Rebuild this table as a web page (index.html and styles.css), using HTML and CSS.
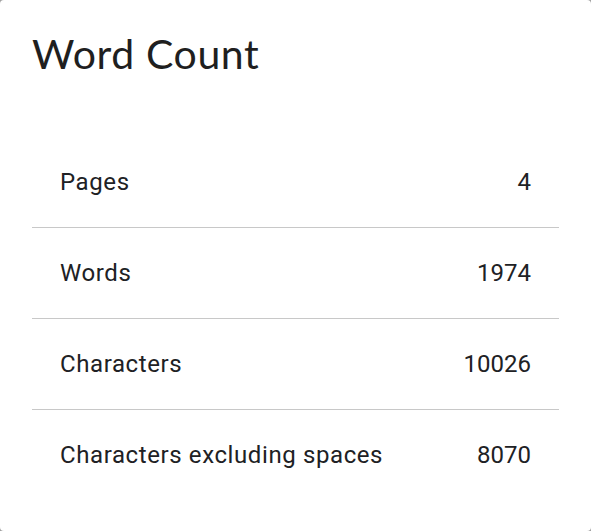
FILE: index.html
```html
<!DOCTYPE html>
<html>
<head>
<meta charset="utf-8">
<link rel="stylesheet" href="styles.css">
</head>
<body>
<div class="dialog">
  <h1 class="title">Word Count</h1>
  <div class="list">
    <div class="row"><span class="label">Pages</span><span class="value">4</span></div>
    <div class="row"><span class="label">Words</span><span class="value">1974</span></div>
    <div class="row"><span class="label">Characters</span><span class="value">10026</span></div>
    <div class="row"><span class="label">Characters excluding spaces</span><span class="value">8070</span></div>
  </div>
</div>
</body>
</html>
```
FILE: styles.css
```css
html, body {
  margin: 0;
  padding: 0;
  height: 100%;
  background: #a0a0a0;
}
.dialog {
  box-sizing: border-box;
  height: 531px;
  background: #ffffff;
  border-radius: 4px;
  padding: 28px 32px 0 32px;
  color: #202124;
}
.title {
  margin: 0;
  font-family: "Lato", sans-serif;
  font-weight: 400;
  font-size: 41px;
  line-height: 52px;
  letter-spacing: 0.6px;
  color: #1f1f1f;
}
.list {
  margin-top: 57px;
}
.row {
  display: flex;
  justify-content: space-between;
  align-items: center;
  height: 90px;
  padding: 0 28px;
  font-family: "Roboto", sans-serif;
  font-size: 24px;
  color: #202124;
}
.label {
  letter-spacing: 0.6px;
}
.row + .row {
  border-top: 1px solid #c8c8c8;
}
```
